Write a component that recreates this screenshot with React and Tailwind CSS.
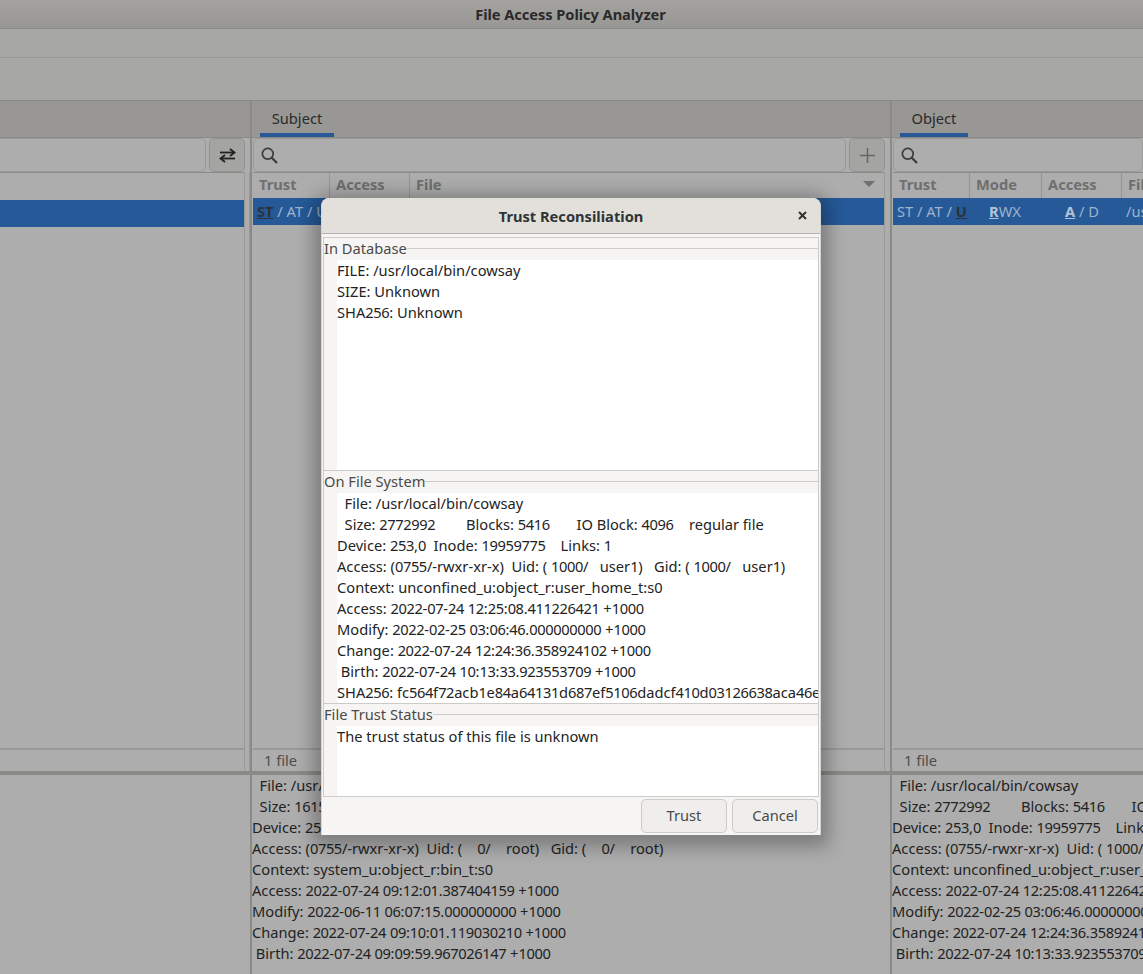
const subjectInfo = [
  "  File: /usr/local/bin/python3.10",
  "  Size: 16152\t         Blocks: 32         IO Block: 4096\t   regular file",
  "Device: 253,0  Inode: 1310803     Links: 1",
  "Access: (0755/-rwxr-xr-x)  Uid: (    0/    root)   Gid: (    0/    root)",
  "Context: system_u:object_r:bin_t:s0",
  "Access: 2022-07-24 09:12:01.387404159 +1000",
  "Modify: 2022-06-11 06:07:15.000000000 +1000",
  "Change: 2022-07-24 09:10:01.119030210 +1000",
  " Birth: 2022-07-24 09:09:59.967026147 +1000",
];

const objectInfo = [
  "  File: /usr/local/bin/cowsay",
  "  Size: 2772992\t       Blocks: 5416       IO Block: 4096\t   regular file",
  "Device: 253,0  Inode: 19959775    Links: 1",
  "Access: (0755/-rwxr-xr-x)  Uid: ( 1000/   user1)   Gid: ( 1000/   user1)",
  "Context: unconfined_u:object_r:user_home_t:s0",
  "Access: 2022-07-24 12:25:08.411226421 +1000",
  "Modify: 2022-02-25 03:06:46.000000000 +1000",
  "Change: 2022-07-24 12:24:36.358924102 +1000",
  " Birth: 2022-07-24 10:13:33.923553709 +1000",
];

// digits sit on whole pixels in the original, tabs are a bit wider than spaces
const Line = ({ text }) => (
  <div>
    {text.split(/(\d+|\t)/).map((part, i) => {
      if (part === "\t") return <span key={i} className="inline-block w-[4px]" />;
      if (i % 2) return <span key={i} className="tracking-[-0.39px]">{part}</span>;
      return part;
    })}
  </div>
);

const SearchIcon = () => (
  <svg width="17" height="17" viewBox="0 0 17 17" fill="none" stroke="#3b3b3b" strokeWidth="1.7">
    <circle cx="6.8" cy="6.8" r="5.4" />
    <path d="M10.8 10.8 L16 16" strokeWidth="2.2" />
  </svg>
);

const SwapIcon = () => (
  <svg width="17" height="15" viewBox="0 0 17 15" fill="none" stroke="#222" strokeWidth="1.8">
    <path d="M1 4.5 H15" />
    <path d="M11 1 L15.5 4.5 L11 8" />
    <path d="M16 10.5 H2" />
    <path d="M6 7 L1.5 10.5 L6 14" />
  </svg>
);

const PlusIcon = () => (
  <svg width="15" height="15" viewBox="0 0 15 15" stroke="#666665" strokeWidth="1.5">
    <path d="M7.5 0 V15 M0 7.5 H15" />
  </svg>
);

const CloseIcon = () => (
  <svg width="9" height="9" viewBox="0 0 9 9" stroke="#2e3436" strokeWidth="2">
    <path d="M1 1 L8 8 M8 1 L1 8" />
  </svg>
);

const Tab = ({ label, width }) => (
  <div className="h-[37px] shrink-0 bg-[#989794] border-b border-[#8b8a87] pl-[8px]">
    <div className={`h-full ${width} border-b-4 border-[#255998] flex items-center justify-center pt-[2px] text-[#2a2a29]`}>
      {label}
    </div>
  </div>
);

const SearchEntry = () => (
  <div className="flex-1 min-w-0 h-[34px] bg-[#adadad] border border-[#9a9997] rounded-[5px] flex items-center pl-[7px]">
    <SearchIcon />
  </div>
);

const HeaderCell = ({ label, width }) => (
  <div className={`${width} shrink-0 h-full border-r border-[#959492] pl-[6px] pb-[4px] flex items-center font-bold text-[#6f6f6e]`}>
    {label}
  </div>
);

const Key = ({ children }) => <span className="font-bold underline text-[#2c3238]">{children}</span>;

const InfoText = ({ lines }) => (
  <div className="h-[199px] bg-[#adadad] overflow-hidden text-[#222] leading-[21px] whitespace-pre">
    {lines.map((l, i) => (
      <Line key={i} text={l} />
    ))}
  </div>
);

const Legend = ({ title }) => (
  <div className="h-[22px] shrink-0 flex items-center pb-[2px] text-[#4a4a48]">
    <span>{title}</span>
    <div className="flex-1 h-px bg-[#cdcbc8]" />
  </div>
);

const Section = ({ title, children }) => (
  <div className="h-[233px] flex flex-col shrink-0 border-b border-[#cdcbc8] overflow-hidden">
    <Legend title={title} />
    <div className="flex-1 pl-[13px] min-h-0">
      <div className="h-full bg-white text-[#232323] leading-[21px] whitespace-pre overflow-hidden">{children}</div>
    </div>
  </div>
);

const Dialog = () => (
  <div className="absolute left-[321px] top-[198px] w-[500px] h-[637px] bg-[#f6f5f4] rounded-t-[8px] border-x border-[#d6d4d1] shadow-[0_4px_18px_8px_rgba(0,0,0,0.28)] flex flex-col">
    <div className="h-[36px] shrink-0 bg-[#e3e0dc] rounded-t-[8px] border-b border-[#b5b2ae] relative flex items-center justify-center">
      <span className="font-bold text-[#2e3436]">Trust Reconsiliation</span>
      <div className="absolute right-[13px] top-[13px] flex">
        <CloseIcon />
      </div>
    </div>
    <div className="mt-[3px] mx-[1px] h-[560px] border border-[#cdcbc8] flex flex-col">
      <Section title="In Database">
        <Line text="FILE: /usr/local/bin/cowsay" />
        <Line text="SIZE: Unknown" />
        <Line text="SHA256: Unknown" />
      </Section>
      <Section title="On File System">
        {objectInfo.map((l, i) => (
          <Line key={i} text={l} />
        ))}
        <Line text="SHA256: fc564f72acb1e84a64131d687ef5106dadcf410d03126638aca46e" />
      </Section>
      <div className="flex-1 flex flex-col min-h-0">
        <Legend title="File Trust Status" />
        <div className="flex-1 pl-[13px]">
          <div className="h-full bg-white text-[#232323] leading-[21px]">The trust status of this file is unknown</div>
        </div>
      </div>
    </div>
    <div className="flex justify-end gap-[5px] pr-[2px] pt-[2px]">
      <button className="w-[86px] h-[34px] rounded-[5px] border border-[#cdcbc8] bg-[#efeeec] text-[#4a4a48] pb-[2px]">Trust</button>
      <button className="w-[86px] h-[34px] rounded-[5px] border border-[#cdcbc8] bg-[#efeeec] text-[#4a4a48] pb-[2px]">Cancel</button>
    </div>
  </div>
);

export default function App() {
  return (
    <div className="relative w-[1143px] h-[974px] overflow-hidden bg-[#adadad] text-[14.67px] font-['Noto_Sans',sans-serif] flex flex-col">
      <div className="h-[29px] shrink-0 bg-gradient-to-b from-[#a3a29f] to-[#989794] border-b border-[#8b8a87] flex items-center justify-center font-bold tracking-[-0.07px] pr-[2px] text-[#2a2a29]">
        File Access Policy Analyzer
      </div>
      <div className="h-[29px] shrink-0 bg-[#a7a7a5] border-b border-[#9a9997]" />
      <div className="h-[43px] shrink-0 bg-[#a7a7a5] border-b border-[#8b8a87]" />

      <div className="h-[674px] shrink-0 flex border-b-4 border-[#8b8a87]">
        <div className="w-[252px] shrink-0 flex flex-col border-r-2 border-[#8b8a87]">
          <div className="h-[37px] shrink-0 bg-[#989794] border-b border-[#8b8a87]" />
          <div className="h-[34px] shrink-0 flex">
            <div className="flex-1 bg-[#adadad] border border-l-0 border-[#9a9997] rounded-r-[5px]" />
            <div className="w-[36px] ml-[3px] mr-[5px] bg-[#a4a4a2] border border-[#949391] rounded-[5px] flex items-center justify-center">
              <SwapIcon />
            </div>
          </div>
          <div className="flex-1 flex min-h-0">
            <div className="flex-1 flex flex-col border-t border-[#8b8a87]">
              <div className="h-[27px] shrink-0 bg-[#adadad]" />
              <div className="h-[27px] shrink-0 bg-[#255998]" />
              <div className="flex-1" />
              <div className="h-[23px] shrink-0 border-t-2 border-[#9a9997]" />
            </div>
            <div className="w-[6px] border-x border-[#9a9997]" />
          </div>
        </div>

        <div className="w-[640px] shrink-0 flex flex-col border-r-2 border-[#8b8a87]">
          <Tab label="Subject" width="w-[74px]" />
          <div className="h-[34px] shrink-0 flex pl-[1px]">
            <SearchEntry />
            <div className="w-[36px] ml-[3px] mr-[5px] bg-[#a4a4a2] border border-[#949391] rounded-[5px] flex items-center justify-center">
              <PlusIcon />
            </div>
          </div>
          <div className="flex-1 flex flex-col mr-[5px] ml-[1px] border-r border-[#9a9997] min-h-0">
            <div className="h-[26px] shrink-0 border-t border-[#8b8a87] flex items-center relative">
              <HeaderCell label="Trust" width="w-[77px]" />
              <HeaderCell label="Access" width="w-[80px]" />
              <div className="pl-[6px] pb-[4px] font-bold text-[#6f6f6e]">File</div>
              <div className="absolute right-[9px] top-[8px] border-x-[6px] border-x-transparent border-t-[6px] border-t-[#6f6f6e]" />
            </div>
            <div className="h-[27px] shrink-0 bg-[#255998] text-[#9fb4cc] flex items-center pb-[2px] pl-[4px] whitespace-pre">
              <Key>ST</Key> / AT / U
            </div>
            <div className="flex-1" />
            <div className="h-[23px] shrink-0 border-t-2 border-[#9a9997] flex items-center pl-[11px] pb-[1px] text-[#4d4d4c]">1 file</div>
          </div>
        </div>

        <div className="flex-1 min-w-0 flex flex-col">
          <Tab label="Object" width="w-[68px]" />
          <div className="h-[34px] shrink-0 flex pl-[1px]">
            <SearchEntry />
          </div>
          <div className="flex-1 flex flex-col ml-[1px] min-h-0">
            <div className="h-[26px] shrink-0 border-t border-[#8b8a87] flex items-center">
              <HeaderCell label="Trust" width="w-[77px]" />
              <HeaderCell label="Mode" width="w-[72px]" />
              <HeaderCell label="Access" width="w-[80px]" />
              <div className="pl-[6px] pb-[4px] font-bold text-[#6f6f6e]">File</div>
            </div>
            <div className="h-[27px] shrink-0 bg-[#255998] text-[#9fb4cc] flex items-center pb-[2px] whitespace-pre">
              <div className="w-[77px] pl-[4px] shrink-0">ST / AT / <Key>U</Key></div>
              <div className="w-[72px] pl-[19px] shrink-0"><span className="font-bold underline text-[#b4c3d6]">R</span>WX</div>
              <div className="w-[80px] pl-[23px] shrink-0"><span className="font-bold underline text-[#b4c3d6]">A</span> / D</div>
              <div className="pl-[4px]">/usr/local/bin/cowsay</div>
            </div>
            <div className="flex-1" />
            <div className="h-[23px] shrink-0 border-t-2 border-[#9a9997] flex items-center pl-[11px] pb-[1px] text-[#4d4d4c]">1 file</div>
          </div>
        </div>
      </div>

      <div className="flex-1 flex min-h-0">
        <div className="w-[252px] shrink-0 border-r-2 border-[#8b8a87]" />
        <div className="w-[640px] shrink-0 border-r-2 border-[#8b8a87]">
          <InfoText lines={subjectInfo} />
        </div>
        <div className="flex-1 min-w-0">
          <InfoText lines={objectInfo} />
        </div>
      </div>

      <Dialog />
    </div>
  );
}
